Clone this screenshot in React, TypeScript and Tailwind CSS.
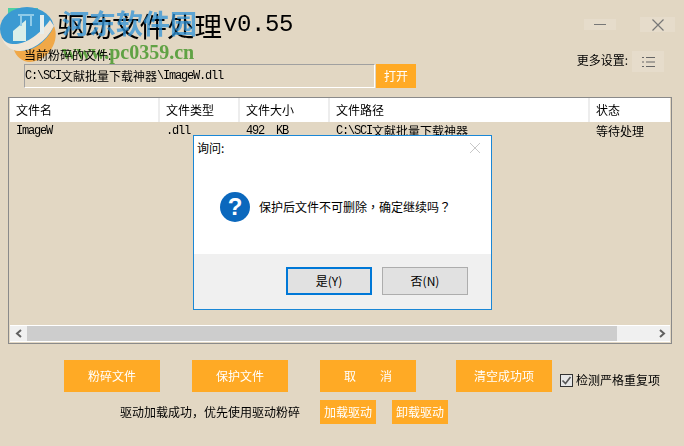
import React from "react";

const cjk = "font-['Noto_Sans_CJK_SC','Noto_Sans',sans-serif]";

// the app's bitmap font is half width for latin: 6px per char next to 12px CJK
function MixedText({ text }: { text: string }) {
  const parts = text.match(/[\x20-\x7e]+|[^\x20-\x7e]+/g) ?? [];
  return (
    <>
      {parts.map((part, i) =>
        /^[\x20-\x7e]/.test(part) ? (
          <span key={i} className="whitespace-pre font-['Liberation_Mono',monospace] text-[12px] tracking-[-1.2px]">
            {part}
          </span>
        ) : (
          <span key={i} className="text-[12px]">
            {part}
          </span>
        )
      )}
    </>
  );
}

function OrangeButton({ label, className }: { label: string; className: string }) {
  return (
    <button className={`flex items-center justify-center bg-[#ffaa25] text-white ${className}`}>
      {label}
    </button>
  );
}

const columns = [
  { label: "文件名", value: "ImageW", width: "w-[150px]" },
  { label: "文件类型", value: ".dll", width: "w-[80px]" },
  { label: "文件大小", value: "492  KB", width: "w-[90px]" },
  { label: "文件路径", value: "C:\\SCI文献批量下载神器", width: "w-[260px]" },
  { label: "状态", value: "等待处理", width: "flex-1" },
];

function Logo() {
  return (
    <svg width="60" height="66" viewBox="0 0 60 66" className="absolute left-0 top-0">
      <rect x="8" y="8" width="30" height="22" fill="#4fd0a0" />
      <ellipse cx="27" cy="29" rx="27" ry="22" fill="#3b9ad2" />
      <path d="M14 50 C30 54 46 44 54 26 C60 40 50 60 30 62 C22 62 16 56 14 50 Z" fill="#f0a848" />
      <path d="M2 38 C8 48 30 48 50 20 L54 26 C44 46 24 54 14 50 C8 48 4 44 2 38 Z" fill="#efe6d8" />
      <path d="M13 31 L26 20 L26 41 L13 41 Z" fill="#d9efe9" />
      <rect x="40" y="15" width="4" height="19" fill="#e6eeee" />
      <path d="M18 15 H34 M21 15 V26 M31 15 V26" stroke="#8fcbe8" strokeWidth="2" fill="none" />
    </svg>
  );
}

function Dialog() {
  return (
    <div className={`absolute left-[193px] top-[135px] flex h-[175px] w-[299px] flex-col border border-[#1a87d6] bg-white text-xs text-black ${cjk}`}>
      <div className="flex h-[24px] shrink-0 items-center justify-between pl-[3px] pr-[10px]">
        <span className="text-[12px]">询问:</span>
        <svg width="12" height="12" viewBox="0 0 12 12">
          <path d="M1 1 L11 11 M11 1 L1 11" stroke="#c8c8c8" strokeWidth="1" />
        </svg>
      </div>
      <div className="flex flex-1 items-start pl-[26px] pt-[32px]">
        <svg width="30" height="30" viewBox="0 0 30 30">
          <circle cx="15" cy="15" r="15" fill="#0b68bd" />
          <text x="15" y="23" textAnchor="middle" fontSize="24" fontWeight="700" fill="#fff" fontFamily="Liberation Sans">
            ?
          </text>
        </svg>
        <span className="ml-[9px] mt-[5px] text-[12px] leading-[20px]">
          保护后文件不可删除<span className="font-['Noto_Sans_CJK_TC']">，</span>确定继续吗<span className="font-['Noto_Sans_CJK_TC']">？</span>
        </span>
      </div>
      <div className="flex h-[55px] shrink-0 items-start gap-[10px] bg-[#f0f0f0] pl-[92px] pt-[13px]">
        <button className="h-[28px] w-[86px] border-2 border-[#0078d7] bg-[#e1e1e1] text-[12px]">是(Y)</button>
        <button className="h-[28px] w-[86px] border border-[#adadad] bg-[#e1e1e1] text-[12px]">否(N)</button>
      </div>
    </div>
  );
}

export default function App() {
  return (
    <div className={`relative flex h-[446px] w-[684px] flex-col overflow-hidden bg-[#e2d7c3] text-xs text-black ${cjk}`}>
      {/* Title bar */}
      <div className="flex h-[48px] shrink-0 items-start pl-[57px]">
        <h1 className="mt-[7px] flex items-center text-[27.5px] leading-[36px] font-normal">
          驱动文件处理
          <span className="ml-[1px] font-['Liberation_Mono',monospace] text-[24px] tracking-[-0.4px]">v0.55</span>
        </h1>
        <div className="ml-auto flex items-start">
          <button className="mt-[19px] flex h-[11px] w-[32px] items-center justify-center bg-[#e6dccb]">
            <span className="h-px w-[12px] bg-[#777]" />
          </button>
          <button className="ml-[24px] mr-[9px] mt-[17px] flex h-[15px] w-[35px] items-center justify-center bg-[#e6dccb]">
            <svg width="12" height="12" viewBox="0 0 12 12">
              <path d="M0.5 0.5 L11.5 11.5 M11.5 0.5 L0.5 11.5" stroke="#777" strokeWidth="1.2" />
            </svg>
          </button>
        </div>
      </div>

      {/* File picker */}
      <div className="flex h-[49px] shrink-0 pl-[24px]">
        <div className="flex flex-col">
          <span className="relative z-10 -mt-[1px] mb-[2px] h-[15px] text-[12px] leading-[15px]">当前粉碎的文件:</span>
          <div className="flex">
            <div className="flex h-[24px] w-[351px] items-center border-t border-l border-t-[#a0a0a0] border-l-[#a0a0a0] border-r border-b border-r-white border-b-white">
              <MixedText text="C:\SCI文献批量下载神器\ImageW.dll" />
            </div>
            <OrangeButton label="打开" className="ml-px h-[24px] w-[40px] text-[12px]" />
          </div>
        </div>
        <div className="ml-auto mr-[20px] flex h-[24px] items-start">
          <span className="mt-[4px] text-[12px]">更多设置:</span>
          <div className="ml-[4px] mt-[3px] flex h-[21px] w-[32px] items-center justify-center bg-[#e6dccb]">
            <svg width="13" height="12" viewBox="0 0 13 12">
              <path d="M0 1.5 H2 M4 1.5 H13 M0 6 H2 M4 6 H13 M0 10.5 H2 M4 10.5 H13" stroke="#666" strokeWidth="1" />
            </svg>
          </div>
        </div>
      </div>

      {/* File list */}
      <div className="ml-[8px] flex h-[247px] w-[664px] shrink-0 flex-col border border-[#8a8a8a] px-px pb-px">
        <div className="flex h-[24px] shrink-0 bg-white">
          {columns.map((col) => (
            <div key={col.label} className={`flex items-center border-r-2 border-r-[#ededed] pl-[6px] text-[12px] last:border-r-0 ${col.width}`}>
              {col.label}
            </div>
          ))}
        </div>
        <div className="mt-px flex h-[16px] shrink-0">
          {columns.map((col) => (
            <div key={col.label} className={`flex items-center pl-[6px] ${col.width}`}>
              <MixedText text={col.value} />
            </div>
          ))}
        </div>
        <div className="flex-1" />
        <div className="flex h-[17px] shrink-0 items-stretch border-t border-b border-t-white border-b-white bg-[#f0f0f0]">
          <div className="flex w-[17px] items-center justify-center">
            <svg width="8" height="9" viewBox="0 0 8 9">
              <path d="M6 1 L2 4.5 L6 8" stroke="#606060" strokeWidth="2" fill="none" />
            </svg>
          </div>
          <div className="flex-1 bg-[#cdcdcd]" />
          <div className="flex w-[53px] items-center justify-end pr-[4px]">
            <svg width="8" height="9" viewBox="0 0 8 9">
              <path d="M2 1 L6 4.5 L2 8" stroke="#606060" strokeWidth="2" fill="none" />
            </svg>
          </div>
        </div>
      </div>

      {/* Actions */}
      <div className="mt-[16px] flex h-[32px] shrink-0 pl-[64px] text-[12px]">
        <OrangeButton label="粉碎文件" className="w-[96px]" />
        <OrangeButton label="保护文件" className="ml-[32px] w-[96px]" />
        <OrangeButton label="取　　消" className="ml-[32px] w-[96px]" />
        <OrangeButton label="清空成功项" className="ml-[40px] w-[96px]" />
        <label className="ml-[8px] mt-[13px] flex h-[14px] items-center gap-[3px]">
          <span className="flex h-[13px] w-[13px] items-center justify-center border border-[#333] bg-[#e6e6e6]">
            <svg width="11" height="11" viewBox="0 0 11 11">
              <path d="M1.5 5.5 L4.5 8.5 L9.5 2" stroke="#555" strokeWidth="1.6" fill="none" />
            </svg>
          </span>
          <span className="whitespace-nowrap">检测严格重复项</span>
        </label>
      </div>
      <div className="mt-[8px] flex h-[24px] shrink-0 items-center pl-[120px] text-[12px]">
        <span className="w-[200px]">驱动加载成功，优先使用驱动粉碎</span>
        <OrangeButton label="加载驱动" className="h-[24px] w-[56px]" />
        <OrangeButton label="卸载驱动" className="ml-[16px] h-[24px] w-[56px]" />
      </div>

      {/* Watermark over the title */}
      <Logo />
      <span className="absolute left-[62px] top-[5px] text-[27px] font-bold leading-[36px] text-[#2f93d8]/75">河东软件园</span>
      <span className="absolute left-[62px] top-[42px] font-['Liberation_Serif',serif] text-[20px] font-bold leading-[20px] text-[#6cc058] mix-blend-multiply">www.pc0359.cn</span>

      <Dialog />
    </div>
  );
}
